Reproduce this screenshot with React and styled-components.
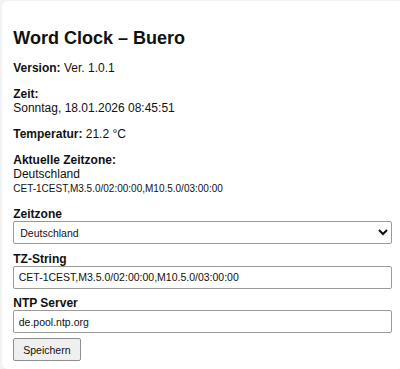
import React from "react";
import styled, { createGlobalStyle } from "styled-components";

const GlobalStyle = createGlobalStyle`
  html, body {
    margin: 0;
    padding: 0;
    background: #f2f2f2;
    overflow: hidden;
  }
  body {
    font-family: "Liberation Sans", Arial, sans-serif;
    color: #111;
  }
`;

const Page = styled.div`
  padding: 1px 0 0 2px;
  width: 400px;
  height: 369px;
  box-sizing: border-box;
  overflow: hidden;
`;

const Card = styled.div`
  background: #fff;
  border-radius: 6px;
  padding: 11.25px;
  width: 401.25px;
  height: 368px;
  box-sizing: border-box;
  overflow: hidden;
`;

const Title = styled.h2`
  font-size: 18px;
  font-weight: bold;
  margin: 16px 0 11px;
`;

const Info = styled.p`
  font-size: 12px;
  margin: 12px 0;
`;

const Small = styled.small`
  font-size: 10px;
`;

const Form = styled.form`
  margin-top: 12px;
`;

const Label = styled.label`
  display: block;
  font-size: 12px;
  font-weight: bold;
  margin-top: ${({ $first }) => ($first ? "0" : "7.5px")};
`;

const fieldStyles = `
  display: block;
  width: 100%;
  box-sizing: border-box;
  font-family: "Liberation Sans", Arial, sans-serif;
  font-size: 10.5px;
  padding: 4.5px;
  border: 1px solid #9a9a9a;
  border-radius: 2px;
  background: #fff;
  color: #111;
  margin: 0;
`;

const Select = styled.select`
  ${fieldStyles}
  height: 23px;
  padding: 0 2px;
`;

const Input = styled.input`
  ${fieldStyles}
  height: 23px;
`;

const Button = styled.button`
  margin-top: 5px;
  font-family: "Liberation Sans", Arial, sans-serif;
  font-size: 10.5px;
  padding: 4.5px 9px;
  height: 22.5px;
  border: 1px solid #8f8f8f;
  border-radius: 2px;
  background: #efefef;
  color: #111;
`;

export default function App() {
  return (
    <Page>
      <GlobalStyle />
      <Card>
        <Title>Word Clock – Buero</Title>
        <Info>
          <strong>Version:</strong> Ver. 1.0.1
        </Info>
        <Info>
          <strong>Zeit:</strong>
          <br />
          Sonntag, 18.01.2026 08:45:51
        </Info>
        <Info>
          <strong>Temperatur:</strong> 21.2 °C
        </Info>
        <Info>
          <strong>Aktuelle Zeitzone:</strong>
          <br />
          Deutschland
          <br />
          <Small>CET-1CEST,M3.5.0/02:00:00,M10.5.0/03:00:00</Small>
        </Info>
        <Form onSubmit={(e) => e.preventDefault()}>
          <Label $first htmlFor="tz">Zeitzone</Label>
          <Select id="tz" defaultValue="de">
            <option value="de">Deutschland</option>
          </Select>
          <Label htmlFor="tzs">TZ-String</Label>
          <Input id="tzs" defaultValue="CET-1CEST,M3.5.0/02:00:00,M10.5.0/03:00:00" />
          <Label htmlFor="ntp">NTP Server</Label>
          <Input id="ntp" defaultValue="de.pool.ntp.org" />
          <Button type="submit">Speichern</Button>
        </Form>
      </Card>
    </Page>
  );
}
